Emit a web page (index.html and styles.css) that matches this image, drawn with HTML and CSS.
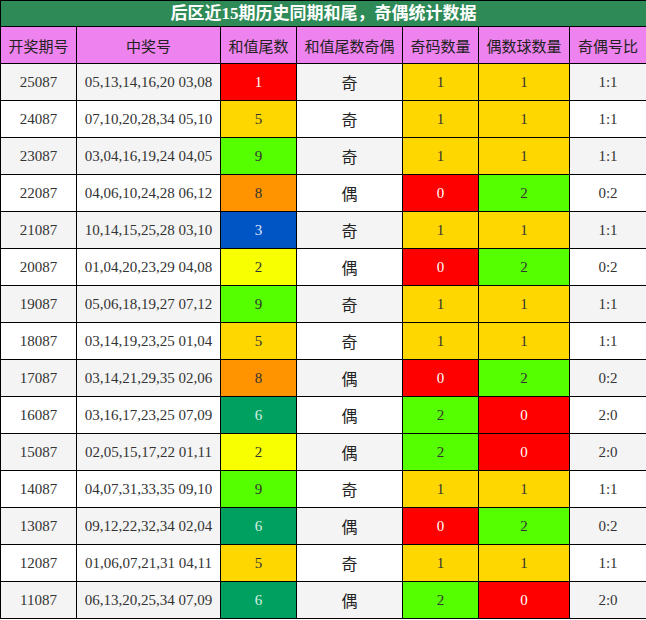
FILE: index.html
```html
<!DOCTYPE html>
<html lang="zh">
<head>
<meta charset="utf-8">
<link rel="stylesheet" href="styles.css">
</head>
<body>
<table class="stats">
  <colgroup>
    <col class="c1"><col class="c2"><col class="c3"><col class="c4"><col class="c5"><col class="c6"><col class="c7">
  </colgroup>
  <thead>
    <tr class="title"><th colspan="7">后区近15期历史同期和尾，奇偶统计数据</th></tr>
    <tr class="head">
      <th>开奖期号</th><th>中奖号</th><th>和值尾数</th><th>和值尾数奇偶</th><th>奇码数量</th><th>偶数球数量</th><th>奇偶号比</th>
    </tr>
  </thead>
  <tbody>
    <tr><td>25087</td><td>05,13,14,16,20 03,08</td><td class="red">1</td><td class="cjk">奇</td><td class="gold">1</td><td class="gold">1</td><td>1:1</td></tr>
    <tr><td>24087</td><td>07,10,20,28,34 05,10</td><td class="gold">5</td><td class="cjk">奇</td><td class="gold">1</td><td class="gold">1</td><td>1:1</td></tr>
    <tr><td>23087</td><td>03,04,16,19,24 04,05</td><td class="lime">9</td><td class="cjk">奇</td><td class="gold">1</td><td class="gold">1</td><td>1:1</td></tr>
    <tr><td>22087</td><td>04,06,10,24,28 06,12</td><td class="orange">8</td><td class="cjk">偶</td><td class="red">0</td><td class="lime">2</td><td>0:2</td></tr>
    <tr><td>21087</td><td>10,14,15,25,28 03,10</td><td class="blue">3</td><td class="cjk">奇</td><td class="gold">1</td><td class="gold">1</td><td>1:1</td></tr>
    <tr><td>20087</td><td>01,04,20,23,29 04,08</td><td class="yellow">2</td><td class="cjk">偶</td><td class="red">0</td><td class="lime">2</td><td>0:2</td></tr>
    <tr><td>19087</td><td>05,06,18,19,27 07,12</td><td class="lime">9</td><td class="cjk">奇</td><td class="gold">1</td><td class="gold">1</td><td>1:1</td></tr>
    <tr><td>18087</td><td>03,14,19,23,25 01,04</td><td class="gold">5</td><td class="cjk">奇</td><td class="gold">1</td><td class="gold">1</td><td>1:1</td></tr>
    <tr><td>17087</td><td>03,14,21,29,35 02,06</td><td class="orange">8</td><td class="cjk">偶</td><td class="red">0</td><td class="lime">2</td><td>0:2</td></tr>
    <tr><td>16087</td><td>03,16,17,23,25 07,09</td><td class="teal">6</td><td class="cjk">偶</td><td class="lime">2</td><td class="red">0</td><td>2:0</td></tr>
    <tr><td>15087</td><td>02,05,15,17,22 01,11</td><td class="yellow">2</td><td class="cjk">偶</td><td class="lime">2</td><td class="red">0</td><td>2:0</td></tr>
    <tr><td>14087</td><td>04,07,31,33,35 09,10</td><td class="lime">9</td><td class="cjk">奇</td><td class="gold">1</td><td class="gold">1</td><td>1:1</td></tr>
    <tr><td>13087</td><td>09,12,22,32,34 02,04</td><td class="teal">6</td><td class="cjk">偶</td><td class="red">0</td><td class="lime">2</td><td>0:2</td></tr>
    <tr><td>12087</td><td>01,06,07,21,31 04,11</td><td class="gold">5</td><td class="cjk">奇</td><td class="gold">1</td><td class="gold">1</td><td>1:1</td></tr>
    <tr><td>11087</td><td>06,13,20,25,34 07,09</td><td class="teal">6</td><td class="cjk">偶</td><td class="lime">2</td><td class="red">0</td><td>2:0</td></tr>
  </tbody>
</table>
</body>
</html>
```
FILE: styles.css
```css
html, body {
  margin: 0;
  padding: 0;
  background: #ffffff;
}

.stats {
  border-collapse: collapse;
  table-layout: fixed;
  width: 646px;
  font-family: "Liberation Serif", "Noto Sans CJK SC", serif;
  font-size: 15px;
  color: #333333;
}

.c1 { width: 76px; }
.c2 { width: 144px; }
.c3 { width: 76px; }
.c4 { width: 106px; }
.c5 { width: 76px; }
.c6 { width: 91px; }
.c7 { width: 77px; }

.stats th,
.stats td {
  border: 1px solid #000000;
  padding: 0;
  text-align: center;
  vertical-align: middle;
}

.title th {
  height: 25px;
  background: #2e8b57;
  color: #ffffff;
  font-size: 17px;
  font-weight: bold;
  font-family: "Liberation Serif", "Noto Sans CJK SC", sans-serif;
  line-height: 25px;
}

.head th {
  height: 36px;
  background: #ee82ee;
  color: #222222;
  font-weight: normal;
  font-size: 15px;
  font-family: "Noto Sans CJK SC", sans-serif;
}

.stats tbody td {
  height: 36px;
}

.stats tbody tr:nth-child(odd) {
  background: #f4f4f4;
}

.stats tbody tr:nth-child(even) {
  background: #ffffff;
}

.cjk {
  font-family: "Noto Sans CJK SC", sans-serif;
  font-size: 16px;
  color: #222222;
}

.red { background: #ff0000; color: #ffffff; }
.gold { background: #ffd700; color: #333333; }
.lime { background: #55ff00; color: #333333; }
.orange { background: #ff9400; color: #333333; }
.blue { background: #0055c4; color: #dde6ff; }
.yellow { background: #f7ff00; color: #333333; }
.teal { background: #00a060; color: #d8f0e4; }
```
